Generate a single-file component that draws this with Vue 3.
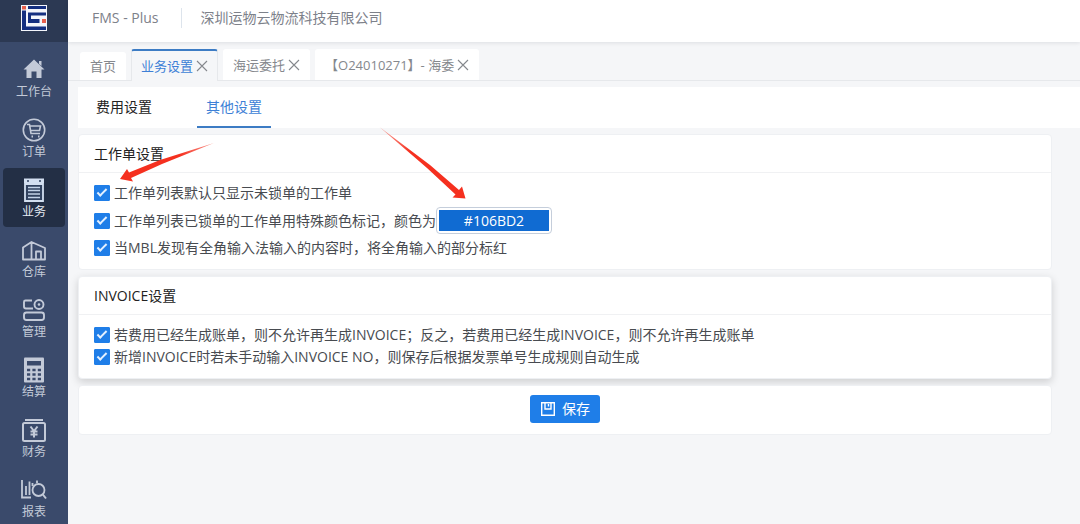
<script setup>
import { ref } from 'vue'

const menu = [
  { id: 'home', label: '工作台' },
  { id: 'order', label: '订单' },
  { id: 'biz', label: '业务' },
  { id: 'store', label: '仓库' },
  { id: 'manage', label: '管理' },
  { id: 'settle', label: '结算' },
  { id: 'finance', label: '财务' },
  { id: 'report', label: '报表' },
]
const current = ref('biz')

const tabs = ref([
  { id: 'index', label: '首页', closable: false },
  { id: 'setting', label: '业务设置', closable: true },
  { id: 'sea', label: '海运委托', closable: true },
  { id: 'detail', label: '【O24010271】- 海委', closable: true },
])
const activeTab = ref('setting')
const closeTab = (id) => {
  tabs.value = tabs.value.filter((t) => t.id !== id)
}

const sections = ['费用设置', '其他设置']
const section = ref('其他设置')

const onlyUnlocked = ref(true)
const markLocked = ref(true)
const markFullWidth = ref(true)
const exclusive = ref(true)
const autoNumber = ref(true)
const color = ref('#106BD2')
</script>

<template>
  <div class="app">
    <aside class="side">
      <div class="brand">
        <svg width="26" height="26" viewBox="0 0 26 26" role="img" aria-label="logo">
          <rect width="26" height="26" fill="#f4f6fb" />
          <path d="M1 5.500H5V21.500H25V25H1Z" fill="#142f80" />
          <path d="M7 1H25V4H7ZM7 7.500H25V10.500H10V14H18.500V18H7Z" fill="#142f80" />
          <rect x="1" y="1" width="4" height="3.500" fill="#e8604c" />
          <rect x="21" y="14" width="4" height="4" fill="#e8604c" />
        </svg>
      </div>
      <nav class="menu">
        <button
          v-for="m in menu"
          :key="m.id"
          type="button"
          class="item"
          :class="{ on: m.id === current }"
          @click="current = m.id"
        >
          <svg width="26" height="26" viewBox="0 0 26 26" fill="none" stroke="currentColor" stroke-width="1.6" aria-hidden="true">
            <g v-if="m.id === 'home'" fill="currentColor" stroke="none">
              <path d="M13 2.500L23.500 12.500H20.500V21H15.500V14.500H10.500V21H5.500V12.500H2.500Z" />
              <path d="M18 4H20.500V9L18 7Z" />
            </g>
            <g v-else-if="m.id === 'order'">
              <circle cx="13" cy="13" r="10.700" />
              <path d="M6 7.500H8.500L10 16.500H19M9 9H19.500L18.500 13.500H9.600" />
              <path d="M10.500 19.500H12M17 19.500H18.500" stroke-width="1.800" />
            </g>
            <g v-else-if="m.id === 'biz'">
              <path d="M3 1.500H23V6H3Z" fill="#d3dff0" stroke="none" />
              <path d="M4 7H22V24H4Z" fill="#31425f" stroke="#d3dff0" stroke-width="1.800" />
              <path d="M6 4H8M18 4H20" stroke="#31425f" />
              <path d="M7 10.500H19M7 13.500H19M7 17H19M7 20.500H19" stroke="#c3d3e8" stroke-width="1.700" />
            </g>
            <g v-else-if="m.id === 'store'" stroke-linejoin="round" stroke-width="1.800">
              <path d="M2 22.500V10.500L10.500 5L24 11V22.500ZM10.500 5V22.500M15 22.500V14.500H20V22.500" />
            </g>
            <g v-else-if="m.id === 'manage'" stroke-width="1.900">
              <path d="M11 3.500H4.500Q3 3.500 3 5V9.500Q3 11.500 5 11.500H12" />
              <circle cx="18" cy="7.500" r="4.500" />
              <circle cx="18" cy="7.500" r="1.300" fill="currentColor" stroke="none" />
              <rect x="3" y="15.500" width="20" height="7.500" rx="2.500" />
            </g>
            <g v-else-if="m.id === 'settle'">
              <rect x="3" y="0.500" width="20" height="25" rx="1" fill="currentColor" stroke="none" />
              <path d="M6 4H20V8.500H6Z" fill="#3a4a6b" stroke="none" />
              <path d="M6 13H20M6 17.500H20M6 22H20" stroke="#3a4a6b" stroke-width="2.500" stroke-dasharray="3.200 2.200" />
            </g>
            <g v-else-if="m.id === 'finance'" stroke-width="2">
              <path d="M4 3H22" />
              <rect x="2" y="6" width="22" height="18" rx="1.500" />
              <path d="M9.500 9.500L13 14L16.500 9.500M13 14V20.500M9.500 14.500H16.500M9.500 17.500H16.500" />
            </g>
            <g v-else stroke-width="1.800">
              <path d="M1 3V20.500H10M5 9V18M8.500 4.500V18" />
              <path d="M11.500 6V9M16 3.500V6" />
              <circle cx="17.500" cy="13" r="6" />
              <path d="M21.500 17L25 21.500" stroke-width="2" />
            </g>
          </svg>
          <span>{{ m.label }}</span>
        </button>
      </nav>
    </aside>

    <div class="main">
      <header class="top">
        <span class="product">FMS - Plus</span>
        <span class="company">深圳运物云物流科技有限公司</span>
      </header>

      <div class="tabs">
        <div v-for="t in tabs" :key="t.id" class="tab" :class="{ on: t.id === activeTab, fixed: !t.closable }">
          <button type="button" class="name" @click="activeTab = t.id">{{ t.label }}</button>
          <button v-if="t.closable" type="button" class="close" :aria-label="'关闭 ' + t.label" @click="closeTab(t.id)">
            <svg width="12" height="12" viewBox="0 0 12 12" stroke="currentColor" stroke-width="1.100" aria-hidden="true">
              <path d="M1 1L11 11M11 1L1 11" />
            </svg>
          </button>
        </div>
      </div>

      <nav class="sections">
        <button
          v-for="s in sections"
          :key="s"
          type="button"
          :class="{ on: s === section }"
          @click="section = s"
        >{{ s }}</button>
      </nav>

      <form class="content" @submit.prevent>
        <section class="card">
          <h2>工作单设置</h2>
          <div class="rows roomy">
            <label class="row"><input v-model="onlyUnlocked" type="checkbox" />工作单列表默认只显示未锁单的工作单</label>
            <div class="row">
              <label class="row"><input v-model="markLocked" type="checkbox" />工作单列表已锁单的工作单用特殊颜色标记，颜色为</label>
              <span class="swatch"><input v-model="color" type="text" aria-label="颜色" /></span>
            </div>
            <label class="row"><input v-model="markFullWidth" type="checkbox" />当MBL发现有全角输入法输入的内容时，将全角输入的部分标红</label>
          </div>
        </section>

        <section class="card raised">
          <h2>INVOICE设置</h2>
          <div class="rows">
            <label class="row"><input v-model="exclusive" type="checkbox" />若费用已经生成账单，则不允许再生成INVOICE；反之，若费用已经生成INVOICE，则不允许再生成账单</label>
            <label class="row"><input v-model="autoNumber" type="checkbox" />新增INVOICE时若未手动输入INVOICE NO，则保存后根据发票单号生成规则自动生成</label>
          </div>
        </section>

        <div class="card actions">
          <button type="submit" class="save">
            <svg width="16" height="16" viewBox="0 0 16 16" fill="none" stroke="currentColor" stroke-width="1.400" aria-hidden="true">
              <path d="M1.700 1.700H14.300V14.300H1.700Z" />
              <path d="M5 2V8H11V2M8.500 3V5.500" />
            </svg>
            <span>保存</span>
          </button>
        </div>
      </form>
    </div>

    <svg class="pointers" width="480" height="210" viewBox="0 0 480 210" aria-hidden="true">
      <defs>
        <linearGradient id="fadeA" gradientUnits="userSpaceOnUse" x1="213" y1="143" x2="180" y2="157">
          <stop offset="0" stop-color="#f5301f" stop-opacity="0.500" />
          <stop offset="1" stop-color="#f5301f" />
        </linearGradient>
        <linearGradient id="fadeB" gradientUnits="userSpaceOnUse" x1="380" y1="127" x2="410" y2="152">
          <stop offset="0" stop-color="#f5301f" stop-opacity="0.400" />
          <stop offset="1" stop-color="#f5301f" />
        </linearGradient>
      </defs>
      <path d="M214 143L160 160L129 172.500L127 169L120 179L133 181.500L131 178L162 164Z" fill="url(#fadeA)" />
      <path d="M379.500 127L430 165L459 190L462 186.500L465.500 198.500L452.500 197.500L455.500 194.500L427 168Z" fill="url(#fadeB)" />
    </svg>
  </div>
</template>

<style>
body {
  background: #f5f6f8;
}
</style>

<style scoped>
.app {
  position: relative;
  display: flex;
  height: 100vh;
  overflow: hidden;
  font-family: "Open Sans", "Noto Sans CJK SC", sans-serif;
  font-size: 14px;
  line-height: 20px;
  color: #484b50;
}
button {
  margin: 0;
  padding: 0;
  border: 0;
  background: none;
  font: inherit;
  color: inherit;
  cursor: pointer;
}
.side {
  flex: none;
  width: 68px;
  background: #3a4a6b;
}
.brand {
  display: flex;
  justify-content: center;
  height: 42px;
  padding-top: 5px;
  box-sizing: border-box;
  background: #2c3953;
}
.menu {
  display: flex;
  flex-direction: column;
  gap: 1px;
  padding: 6px 3px 0;
}
.item {
  display: flex;
  flex: none;
  flex-direction: column;
  align-items: center;
  height: 59px;
  padding-top: 9px;
  box-sizing: border-box;
  border-radius: 4px;
  font-size: 12px;
  line-height: 18px;
  color: #c3cad8;
}
.item.on {
  background: #232f45;
  color: #e6ebf3;
}
.item svg {
  flex: none;
}
.main {
  flex: 1;
  min-width: 0;
}
.top {
  display: flex;
  align-items: center;
  height: 42px;
  padding: 0 24px 6px;
  box-sizing: border-box;
  background: #fff;
  box-shadow: 0 1px 4px rgba(0, 21, 41, 0.1);
  color: #7d818a;
}
.company {
  margin-left: 22px;
  padding-left: 19px;
  border-left: 1px solid #dde4ec;
}
.tabs {
  display: flex;
  align-items: flex-end;
  gap: 5px;
  height: 39px;
  padding-left: 12px;
  box-sizing: border-box;
  border-bottom: 1px solid #e6e8eb;
  font-size: 13px;
  color: #85888d;
}
.tab {
  display: flex;
  align-items: center;
  gap: 3px;
  height: 31px;
  padding: 0 10px;
  box-sizing: border-box;
  border-radius: 3px 3px 0 0;
  background: #fff;
}
.tab.fixed {
  height: 28px;
}
.tab.on {
  height: 32px;
  margin-bottom: -1px;
  padding: 0 9px;
  border: 1px solid #e6e8eb;
  border-top: 2px solid #3d7cc4;
  border-bottom: 0;
  background: #f5f6f8;
}
.tab.on .name {
  color: #3d7fd6;
}
.close {
  display: flex;
}
.sections {
  display: flex;
  gap: 36px;
  height: 41px;
  margin: 6px 0 0 10px;
  padding-left: 9px;
  background: #fff;
}
.sections button {
  width: 74px;
  border-bottom: 2px solid transparent;
  color: #222;
}
.sections button.on {
  border-color: #3d7cc4;
  color: #3d7fd6;
}
.content {
  display: flex;
  flex-direction: column;
  gap: 6px;
  padding: 6px 28px 0 10px;
}
.card {
  border: 1px solid #eef0f3;
  border-radius: 4px;
  background: #fff;
}
.card.raised {
  box-shadow: 0 3px 8px rgba(0, 0, 0, 0.16);
}
h2 {
  margin: 0;
  padding: 9px 15px 8px;
  border-bottom: 1px solid #f0f1f3;
  font-size: 14px;
  font-weight: 400;
  line-height: 20px;
  color: #222;
}
.rows {
  display: flex;
  flex-direction: column;
  gap: 2px;
  padding: 10px 15px 11px;
}
.rows.roomy {
  gap: 4px;
}
.row {
  display: flex;
  align-items: center;
  white-space: nowrap;
}
input[type="checkbox"] {
  appearance: none;
  flex: none;
  width: 16px;
  height: 16px;
  margin: 0 4px 0 0;
  border: 1px solid #1f7ee8;
  border-radius: 1px;
  background: #fff;
  display: grid;
  place-items: center;
}
input[type="checkbox"]:checked {
  background: #1f7ee8;
}
input[type="checkbox"]:checked::before {
  content: "";
  width: 10px;
  height: 5px;
  margin-bottom: 3px;
  border: solid #e4f0ff;
  border-width: 0 0 2px 2px;
  box-sizing: border-box;
  transform: rotate(-45deg);
}
.swatch {
  padding: 2px;
  border: 1px solid #c5cedb;
  border-radius: 4px;
  background: #fff;
}
.swatch input {
  display: block;
  width: 110px;
  height: 21px;
  padding: 0;
  border: 0;
  background: #106bd2;
  font: inherit;
  color: #fff;
  text-align: center;
}
.actions {
  display: flex;
  justify-content: center;
  padding: 9px 0 11px;
}
.save {
  display: flex;
  align-items: center;
  justify-content: center;
  gap: 6px;
  width: 70px;
  height: 28px;
  border-radius: 3px;
  background: #1f7ee8;
  color: #fff;
}
.pointers {
  position: absolute;
  top: 0;
  left: 0;
  pointer-events: none;
}
</style>
